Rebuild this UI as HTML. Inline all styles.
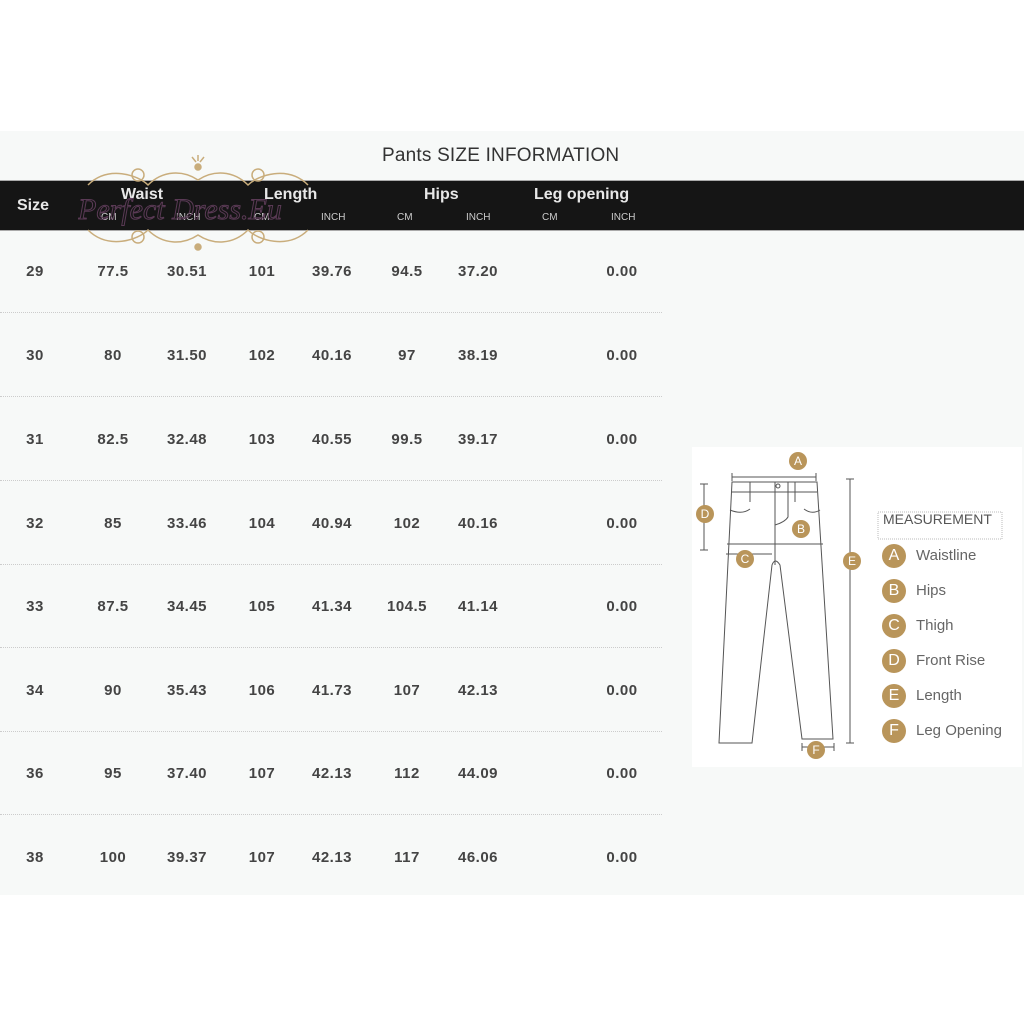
<!DOCTYPE html>
<html><head><meta charset="utf-8"><style>
html,body{margin:0;padding:0;}
body{width:1024px;height:1024px;background:#fff;position:relative;overflow:hidden;font-family:"Liberation Sans",sans-serif;}
.bg{position:absolute;left:0;top:131px;width:1024px;height:764px;background:#f7f9f8;}
.title{position:absolute;left:382px;top:145px;font-size:19px;color:#333;letter-spacing:0.2px;}
.band{position:absolute;left:0;top:180px;width:1024px;height:49px;background:#151515;border-top:1px solid #aaa;border-bottom:1px solid #aaa;}
.h{position:absolute;color:#e8e8e8;font-weight:bold;font-size:16px;}
.s{position:absolute;color:#ccc;font-size:10px;}
.c{position:absolute;font-weight:bold;font-size:15px;color:#444;letter-spacing:0.5px;transform:translateX(-50%);}
.sep{position:absolute;left:0;width:662px;height:0;border-top:1px dotted #ccc;}
.box{position:absolute;left:692px;top:447px;width:330px;height:320px;background:#fff;}
.dot{position:absolute;width:18px;height:18px;border-radius:50%;background:#b9955a;color:#fff;font-size:12px;text-align:center;line-height:18px;}
.leg{position:absolute;font-size:15px;color:#666;}
.ld{position:absolute;width:24px;height:24px;border-radius:50%;background:#b9955a;color:#fff;font-size:16px;text-align:center;line-height:24px;}
</style></head><body>
<div class="bg"></div>
<div class="title">Pants SIZE INFORMATION</div>
<div class="band"></div>
<div class="h" style="left:17px;top:197px">Size</div>
<div class="h" style="left:121px;top:186px">Waist</div>
<div class="h" style="left:264px;top:186px">Length</div>
<div class="h" style="left:424px;top:186px">Hips</div>
<div class="h" style="left:534px;top:186px">Leg opening</div>
<div class="s" style="left:101px;top:212px">CM</div>
<div class="s" style="left:176px;top:212px">INCH</div>
<div class="s" style="left:254px;top:212px">CM</div>
<div class="s" style="left:321px;top:212px">INCH</div>
<div class="s" style="left:397px;top:212px">CM</div>
<div class="s" style="left:466px;top:212px">INCH</div>
<div class="s" style="left:542px;top:212px">CM</div>
<div class="s" style="left:611px;top:212px">INCH</div>

<svg style="position:absolute;left:78px;top:155px" width="240" height="100" viewBox="0 0 240 100" fill="none" stroke="#c9ad7c" stroke-width="1.5">
<path d="M10 30 C30 10 60 20 70 30 C85 15 105 15 120 25 C135 15 155 15 170 30 C180 20 210 10 230 30"/>
<path d="M10 75 C30 95 60 85 70 75 C85 90 105 90 120 80 C135 90 155 90 170 75 C180 85 210 95 230 75"/>
<circle cx="60" cy="20" r="6"/><circle cx="180" cy="20" r="6"/><circle cx="60" cy="82" r="6"/><circle cx="180" cy="82" r="6"/>
<circle cx="120" cy="12" r="3" fill="#c9ad7c"/><circle cx="120" cy="92" r="3" fill="#c9ad7c"/>
<path d="M120 0 V6 M114 2 L118 7 M126 2 L122 7"/>
<text x="0" y="64" font-family="Liberation Serif,serif" font-style="italic" font-size="30" fill="none" stroke="#5a3a55" stroke-width="1">Perfect Dress.Eu</text>
</svg>

<div class="c" style="left:35px;top:263px">29</div><div class="c" style="left:113px;top:263px">77.5</div><div class="c" style="left:187px;top:263px">30.51</div><div class="c" style="left:262px;top:263px">101</div><div class="c" style="left:332px;top:263px">39.76</div><div class="c" style="left:407px;top:263px">94.5</div><div class="c" style="left:478px;top:263px">37.20</div><div class="c" style="left:622px;top:263px">0.00</div>
<div class="sep" style="top:312px"></div>
<div class="c" style="left:35px;top:347px">30</div><div class="c" style="left:113px;top:347px">80</div><div class="c" style="left:187px;top:347px">31.50</div><div class="c" style="left:262px;top:347px">102</div><div class="c" style="left:332px;top:347px">40.16</div><div class="c" style="left:407px;top:347px">97</div><div class="c" style="left:478px;top:347px">38.19</div><div class="c" style="left:622px;top:347px">0.00</div>
<div class="sep" style="top:396px"></div>
<div class="c" style="left:35px;top:431px">31</div><div class="c" style="left:113px;top:431px">82.5</div><div class="c" style="left:187px;top:431px">32.48</div><div class="c" style="left:262px;top:431px">103</div><div class="c" style="left:332px;top:431px">40.55</div><div class="c" style="left:407px;top:431px">99.5</div><div class="c" style="left:478px;top:431px">39.17</div><div class="c" style="left:622px;top:431px">0.00</div>
<div class="sep" style="top:480px"></div>
<div class="c" style="left:35px;top:515px">32</div><div class="c" style="left:113px;top:515px">85</div><div class="c" style="left:187px;top:515px">33.46</div><div class="c" style="left:262px;top:515px">104</div><div class="c" style="left:332px;top:515px">40.94</div><div class="c" style="left:407px;top:515px">102</div><div class="c" style="left:478px;top:515px">40.16</div><div class="c" style="left:622px;top:515px">0.00</div>
<div class="sep" style="top:564px"></div>
<div class="c" style="left:35px;top:598px">33</div><div class="c" style="left:113px;top:598px">87.5</div><div class="c" style="left:187px;top:598px">34.45</div><div class="c" style="left:262px;top:598px">105</div><div class="c" style="left:332px;top:598px">41.34</div><div class="c" style="left:407px;top:598px">104.5</div><div class="c" style="left:478px;top:598px">41.14</div><div class="c" style="left:622px;top:598px">0.00</div>
<div class="sep" style="top:647px"></div>
<div class="c" style="left:35px;top:682px">34</div><div class="c" style="left:113px;top:682px">90</div><div class="c" style="left:187px;top:682px">35.43</div><div class="c" style="left:262px;top:682px">106</div><div class="c" style="left:332px;top:682px">41.73</div><div class="c" style="left:407px;top:682px">107</div><div class="c" style="left:478px;top:682px">42.13</div><div class="c" style="left:622px;top:682px">0.00</div>
<div class="sep" style="top:731px"></div>
<div class="c" style="left:35px;top:765px">36</div><div class="c" style="left:113px;top:765px">95</div><div class="c" style="left:187px;top:765px">37.40</div><div class="c" style="left:262px;top:765px">107</div><div class="c" style="left:332px;top:765px">42.13</div><div class="c" style="left:407px;top:765px">112</div><div class="c" style="left:478px;top:765px">44.09</div><div class="c" style="left:622px;top:765px">0.00</div>
<div class="sep" style="top:814px"></div>
<div class="c" style="left:35px;top:849px">38</div><div class="c" style="left:113px;top:849px">100</div><div class="c" style="left:187px;top:849px">39.37</div><div class="c" style="left:262px;top:849px">107</div><div class="c" style="left:332px;top:849px">42.13</div><div class="c" style="left:407px;top:849px">117</div><div class="c" style="left:478px;top:849px">46.06</div><div class="c" style="left:622px;top:849px">0.00</div>

<div class="box">
<svg width="330" height="320" style="position:absolute;left:0;top:0" fill="none" stroke="#555" stroke-width="1">
<path d="M40 26 V34 M40 30 H124 M124 26 V34"/>
<path d="M40 35 H125 L141 292 H110 L88 118 Q83 110 80 118 L60 296 H27 Z"/>
<path d="M40 45 H125 M83 35 V118 M38 63 Q50 68 58 62 M112 62 Q120 68 128 63 M58 35 V55 M103 35 V55 M83 78 Q93 75 96 70 V35"/>
<path d="M35 97 H131 M34 107 H80"/>
<path d="M12 37 V103 M8 37 H16 M8 103 H16"/>
<path d="M158 32 V296 M154 32 H162 M154 296 H162"/>
<path d="M110 300 H142 M110 296 V304 M142 296 V304"/>
<rect x="186" y="65" width="124" height="27" stroke="#bbb" stroke-dasharray="1 1"/>
<circle cx="86" cy="39" r="2"/>
</svg>
<div class="dot" style="left:97px;top:5px">A</div>
<div class="dot" style="left:100px;top:73px">B</div>
<div class="dot" style="left:44px;top:103px">C</div>
<div class="dot" style="left:4px;top:58px">D</div>
<div class="dot" style="left:151px;top:105px">E</div>
<div class="dot" style="left:115px;top:294px">F</div>
<div style="position:absolute;left:191px;top:64px;font-size:14px;color:#555">MEASUREMENT</div>
<div class="ld" style="left:190px;top:97px">A</div><div class="leg" style="left:224px;top:100px">Waistline</div>
<div class="ld" style="left:190px;top:132px">B</div><div class="leg" style="left:224px;top:135px">Hips</div>
<div class="ld" style="left:190px;top:167px">C</div><div class="leg" style="left:224px;top:170px">Thigh</div>
<div class="ld" style="left:190px;top:202px">D</div><div class="leg" style="left:224px;top:205px">Front Rise</div>
<div class="ld" style="left:190px;top:237px">E</div><div class="leg" style="left:224px;top:240px">Length</div>
<div class="ld" style="left:190px;top:272px">F</div><div class="leg" style="left:224px;top:275px">Leg Opening</div>
</div>
</body></html>
